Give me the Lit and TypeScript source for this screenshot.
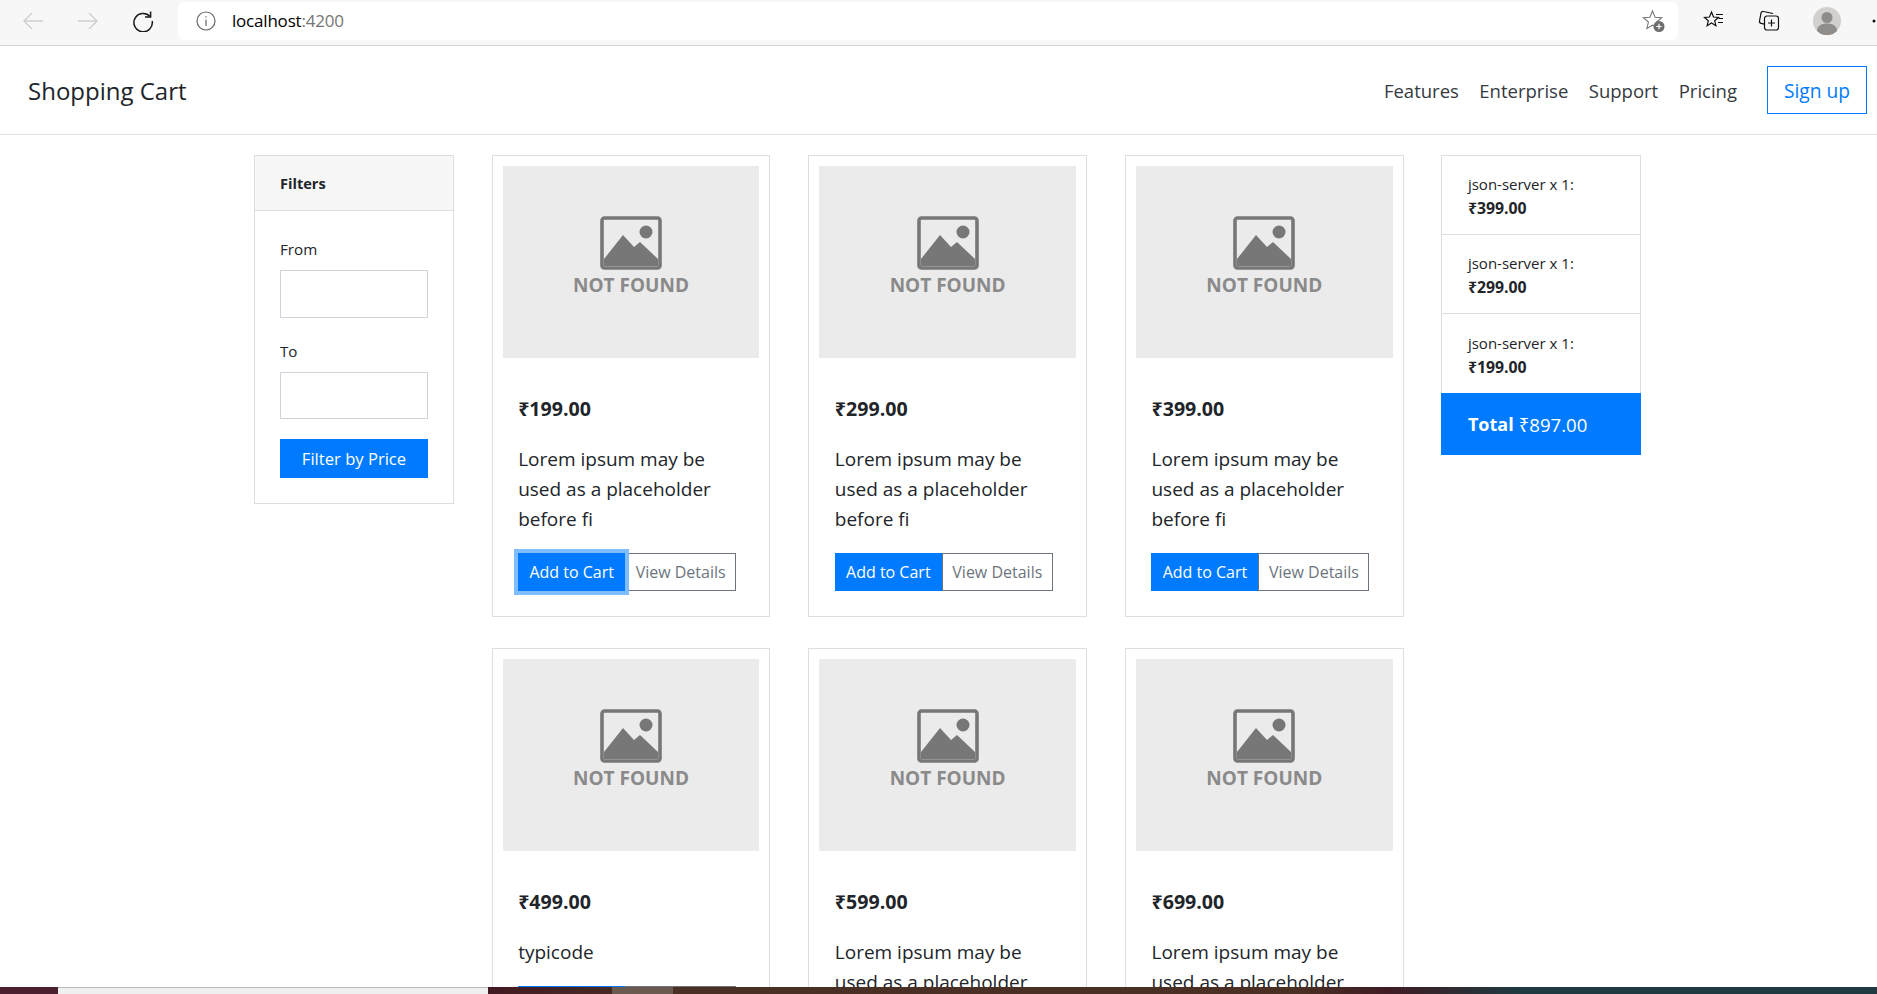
import { LitElement, html, css, svg } from 'lit';
import { customElement } from 'lit/decorators.js';

interface Product {
  price: string;
  text: string;
  focused?: boolean;
}

const PRODUCTS: Product[] = [
  { price: '₹199.00', text: 'Lorem ipsum may be used as a placeholder before fi', focused: true },
  { price: '₹299.00', text: 'Lorem ipsum may be used as a placeholder before fi' },
  { price: '₹399.00', text: 'Lorem ipsum may be used as a placeholder before fi' },
  { price: '₹499.00', text: 'typicode' },
  { price: '₹599.00', text: 'Lorem ipsum may be used as a placeholder before fi' },
  { price: '₹699.00', text: 'Lorem ipsum may be used as a placeholder before fi' },
];

const CART = ['₹399.00', '₹299.00', '₹199.00'];

const placeholderIcon = svg`
  <svg class="ph-icon" viewBox="0 0 62 54" width="62" height="54">
    <rect x="2" y="2" width="58" height="50" rx="2.500" fill="none" stroke="#777" stroke-width="3.600"/>
    <circle cx="46" cy="16" r="6.500" fill="#777"/>
    <path d="M4 43 L23 19 L34 31 L40 26 L58 43 V50 H4 Z" fill="#777"/>
  </svg>`;

@customElement('app-root')
export class AppRoot extends LitElement {
  static styles = css`
    :host {
      display: block;
      height: 994px;
      overflow: hidden;
      font-family: 'Open Sans', 'Noto Sans', sans-serif;
      color: #212529;
      background: #fff;
    }

    .page {
      display: flex;
      flex-direction: column;
      height: 994px;
    }

    /* browser chrome */
    .chrome {
      flex: none;
      display: flex;
      align-items: center;
      height: 46px;
      box-sizing: border-box;
      background: #f7f7f7;
      border-bottom: 1px solid #d4d4d4;
      padding-bottom: 4px;
    }

    .nav-btns {
      display: flex;
      align-items: center;
      gap: 33px;
      padding-left: 22px;
      width: 156px;
      box-sizing: border-box;
    }

    .address {
      width: 1500px;
      height: 38px;
      margin-left: 22px;
      box-sizing: border-box;
      background: #fff;
      border-radius: 6px;
      display: flex;
      align-items: center;
      padding: 0 12px 0 18px;
      font-size: 17px;
      letter-spacing: -0.2px;
      color: #000;
    }

    .address .port {
      color: #767676;
    }

    .address .url {
      margin-left: 16px;
      flex: 1;
    }

    .tools {
      display: flex;
      align-items: center;
      gap: 33px;
      margin-left: 25px;
      white-space: nowrap;
    }

    /* navbar */
    .navbar {
      flex: none;
      height: 89px;
      box-sizing: border-box;
      border-bottom: 1px solid #dee2e6;
      display: flex;
      align-items: center;
      padding: 0 10px 0 28px;
    }

    .brand {
      font-size: 24px;
      flex: 1;
    }

    .links {
      display: flex;
      gap: 20.5px;
      font-size: 18.5px;
      color: #343a40;
      margin-right: 30px;
    }

    .signup {
      width: 100px;
      height: 48px;
      box-sizing: border-box;
      border: 1px solid #007bff;
      color: #007bff;
      font-size: 19.2px;
      display: flex;
      align-items: center;
      justify-content: center;
    }

    /* content */
    .content {
      flex: 1;
      min-height: 0;
      overflow: hidden;
      display: flex;
      align-items: flex-start;
      padding: 20px 0 0 254px;
    }

    .filters {
      flex: none;
      width: 200px;
      height: 349px;
      box-sizing: border-box;
      border: 1px solid #dedede;
    }

    .filters-head {
      height: 55px;
      box-sizing: border-box;
      background: #f7f7f7;
      border-bottom: 1px solid #dedede;
      display: flex;
      align-items: center;
      padding-left: 25px;
      font-size: 14.6px;
      font-weight: 700;
    }

    .filters-body {
      padding: 28px 25px 0;
      font-size: 15.2px;
      display: flex;
      flex-direction: column;
    }

    .filters-body label {
      line-height: 20px;
      margin-bottom: 11px;
    }

    .filters-body input {
      display: block;
      width: 100%;
      height: 48px;
      box-sizing: border-box;
      border: 1px solid #ced4da;
      background: #fff;
      margin-bottom: 23px;
      padding: 0;
    }

    .filters-body input + label + input {
      height: 47px;
      margin-bottom: 24px;
    }

    .filters-body button {
      height: 39px;
      margin-top: -4px;
      border: none;
      background: #007bff;
      color: #fff;
      font: inherit;
      font-size: 16.6px;
      padding: 0;
    }

    .grid {
      flex: none;
      margin-left: 37.67px;
      display: grid;
      grid-template-columns: repeat(3, 278.67px);
      column-gap: 38px;
      row-gap: 31px;
      align-items: start;
    }

    .card {
      box-sizing: border-box;
      height: 462px;
      border: 1px solid #dedede;
      padding: 10px;
    }

    .ph {
      height: 192px;
      background: #ebebeb;
      display: flex;
      flex-direction: column;
      align-items: center;
      padding-top: 50px;
      box-sizing: border-box;
    }

    .ph-text {
      margin-top: 3px;
      font-size: 19px;
      line-height: 24px;
      font-weight: 700;
      color: #8a8a8a;
    }

    .card-body {
      padding: 0 15.5px;
    }

    .price {
      margin-top: 37px;
      font-size: 19.6px;
      line-height: 27px;
      font-weight: 700;
    }

    .desc {
      margin-top: 22px;
      font-size: 19px;
      line-height: 30px;
      height: 90px;
    }

    .desc.short {
      height: 30px;
    }

    .actions {
      display: flex;
      margin-top: 19px;
    }

    .actions button {
      height: 38px;
      box-sizing: border-box;
      font: inherit;
      font-size: 16px;
      padding: 0;
      background: #fff;
    }

    .actions .add {
      width: 107px;
      border: none;
      background: #007bff;
      color: #fff;
    }

    .add.focused {
      box-shadow: 0 0 0 4px #80bdff;
      position: relative;
    }

    .view {
      width: 111px;
      border: 1px solid #6c757d;
      color: #6c757d;
    }

    .cart {
      flex: none;
      width: 200px;
      margin-left: 37.3px;
      box-sizing: border-box;
      font-size: 15px;
    }

    .cart-item {
      height: 79px;
      box-sizing: border-box;
      border: 1px solid #dedede;
      border-bottom: none;
      padding: 16px 26px 0;
      line-height: 24px;
    }

    .cart-item:nth-of-type(3) {
      height: 80px;
      padding-top: 17px;
    }

    .cart-item b {
      display: block;
      font-size: 15.8px;
    }

    .total {
      height: 62px;
      box-sizing: border-box;
      background: #007bff;
      color: #fff;
      display: flex;
      align-items: center;
      gap: 5px;
      padding-left: 27px;
      font-size: 18.6px;
    }

    .total b {
      font-size: 18px;
    }

    /* desktop wallpaper and the window below the browser */
    .strip {
      flex: none;
      height: 7px;
      display: flex;
      background: linear-gradient(
        90deg,
        #421a22 0,
        #421a22 26%,
        #4a3024 36%,
        #4a3024 69%,
        #3f1c24 74%,
        #1f3a40 81%,
        #1f3a40 100%
      );
    }

    .strip .a {
      width: 58px;
      background: #4a2030;
    }

    .strip .b {
      width: 430px;
      background: #f0f0f0;
      border-top: 1px solid #b8b8b8;
      box-sizing: border-box;
    }

    .strip .c {
      width: 124px;
    }

    .strip .d {
      width: 61px;
      background: #6b5a50;
    }
  `;

  private _chrome() {
    return html`
      <div class="chrome">
        <div class="nav-btns">
          <svg width="22" height="22" viewBox="0 0 22 22" fill="none" stroke="#cfcfcf" stroke-width="1.4">
            <path d="M21 11H2M10 3l-8 8 8 8"/>
          </svg>
          <svg width="22" height="22" viewBox="0 0 22 22" fill="none" stroke="#cfcfcf" stroke-width="1.4">
            <path d="M1 11h19M12 3l8 8-8 8"/>
          </svg>
          <svg width="22" height="22" viewBox="0 0 22 22" fill="none" stroke="#1a1a1a" stroke-width="1.5">
            <path d="M18 6.500A9.200 9.200 0 1 0 20.200 11"/>
            <path d="M18.600 1.500v5.600H13"/>
          </svg>
        </div>
        <div class="address">
          <svg width="20" height="20" viewBox="0 0 20 20" fill="none" stroke="#666" stroke-width="1.2">
            <circle cx="10" cy="10" r="9"/>
            <path d="M10 8.500V15M10 5.200v1.400"/>
          </svg>
          <span class="url">localhost<span class="port">:4200</span></span>
          <svg width="24" height="24" viewBox="0 0 24 24" fill="none">
            <path d="M10.500 2l2.600 6.200 6.600.5-5 4.300 1.500 6.500-5.700-3.400-5.600 3.400 1.500-6.500-5-4.300 6.500-.5z" stroke="#777" stroke-width="1.1"/>
            <circle cx="17" cy="17.500" r="5.500" fill="#6e6e6e"/>
            <path d="M17 14.800v5.400M14.300 17.500h5.400" stroke="#fff" stroke-width="1.200"/>
          </svg>
        </div>
        <div class="tools">
          <svg width="22" height="22" viewBox="0 0 22 22" fill="none" stroke="#111" stroke-width="1.200">
            <path d="M8.500 2l2 5 5 .4-3.800 3.300 1.200 5L8.500 13l-4.400 2.700 1.200-5L1.500 7.400l5-.4z"/>
            <path d="M13 4.500h7M15.500 8.500h4.500M15 12.500h5"/>
          </svg>
          <svg width="22" height="22" viewBox="0 0 22 22" fill="none" stroke="#111" stroke-width="1.200">
            <rect x="6.500" y="6" width="14" height="14" rx="2.500"/>
            <path d="M13.500 9.500v7M10 13h7"/>
            <path d="M15 3.500l-9.500-2a2 2 0 0 0-2.500 1.700L1.500 11a2 2 0 0 0 1.500 2.300l3.500.8"/>
          </svg>
          <svg width="28" height="28" viewBox="0 0 28 28">
            <circle cx="14" cy="14" r="14" fill="#d2d0ce"/>
            <circle cx="14" cy="10.500" r="5.500" fill="#8f8c8a"/>
            <path d="M4 24c0-5 4-7.500 10-7.500S24 19 24 24a14 14 0 0 1-20 0z" fill="#8f8c8a"/>
          </svg>
          <svg width="6" height="6" viewBox="0 0 6 6" style="margin-left:-3px">
            <circle cx="3" cy="3" r="1.500" fill="#111"/>
          </svg>
        </div>
      </div>
    `;
  }

  private _card(p: Product) {
    const short = p.text.length < 20;
    return html`
      <div class="card">
        <div class="ph">
          ${placeholderIcon}
          <div class="ph-text">NOT FOUND</div>
        </div>
        <div class="card-body">
          <div class="price">${p.price}</div>
          <div class="desc ${short ? 'short' : ''}">${p.text}</div>
          <div class="actions">
            <button class="add ${p.focused ? 'focused' : ''}">Add to Cart</button>
            <button class="view">View Details</button>
          </div>
        </div>
      </div>
    `;
  }

  render() {
    return html`
      <div class="page">
        ${this._chrome()}
        <nav class="navbar">
          <div class="brand">Shopping Cart</div>
          <div class="links">
            <span>Features</span><span>Enterprise</span><span>Support</span><span>Pricing</span>
          </div>
          <div class="signup">Sign up</div>
        </nav>
        <div class="content">
          <aside class="filters">
            <div class="filters-head">Filters</div>
            <div class="filters-body">
              <label>From</label>
              <input type="text" />
              <label>To</label>
              <input type="text" />
              <button>Filter by Price</button>
            </div>
          </aside>
          <div class="grid">${PRODUCTS.map((p) => this._card(p))}</div>
          <aside class="cart">
            ${CART.map(
              (price) => html`
                <div class="cart-item">json-server x 1:<b>${price}</b></div>
              `
            )}
            <div class="total"><b>Total</b> ₹897.00</div>
          </aside>
        </div>
        <div class="strip">
          <div class="a"></div>
          <div class="b"></div>
          <div class="c"></div>
          <div class="d"></div>
        </div>
      </div>
    `;
  }
}

declare global {
  interface HTMLElementTagNameMap {
    'app-root': AppRoot;
  }
}
